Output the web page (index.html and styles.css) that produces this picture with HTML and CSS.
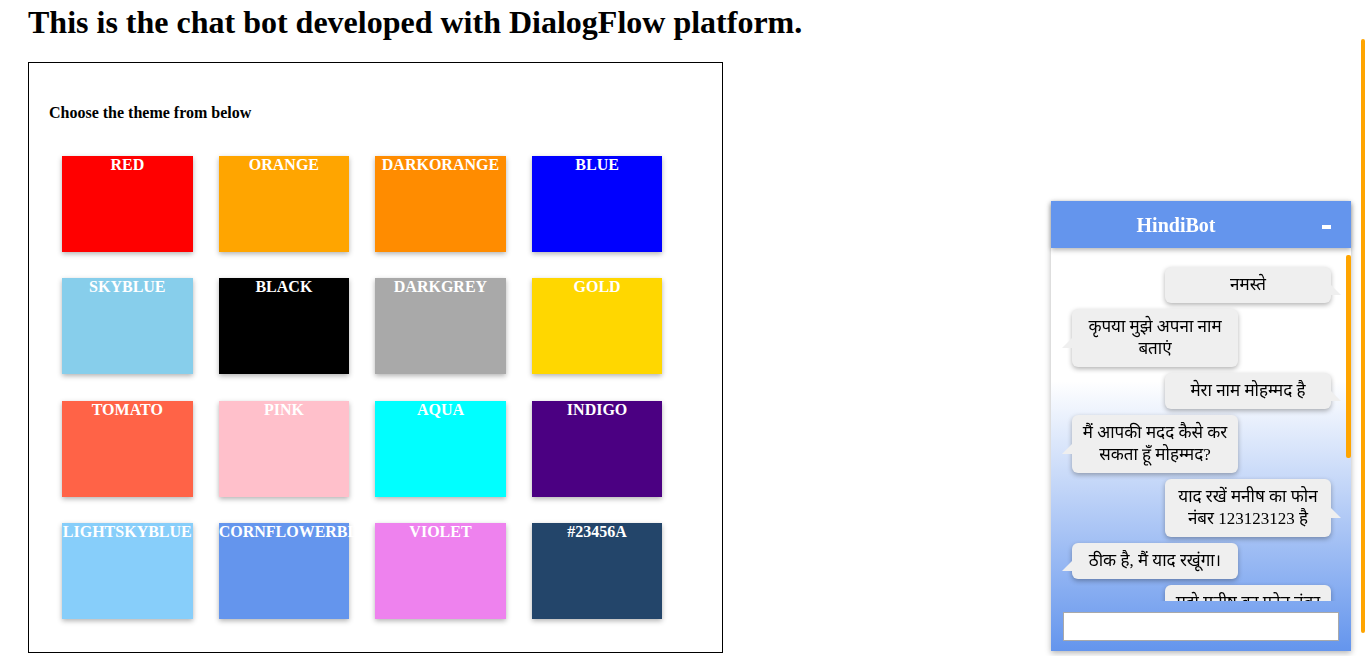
FILE: index.html
```html
<!DOCTYPE html>
<html lang="en">
<head>
<meta charset="utf-8">
<meta name="viewport" content="width=device-width, initial-scale=1">
<title>HindiBot</title>
<link rel="stylesheet" href="styles.css">
</head>
<body>
<main class="page">
  <h1 class="page-title">This is the chat bot developed with DialogFlow platform.</h1>
  <section class="themes">
    <h2 class="themes-title">Choose the theme from below</h2>
    <div class="swatches">
      <button type="button" class="swatch red">RED</button>
      <button type="button" class="swatch orange">ORANGE</button>
      <button type="button" class="swatch darkorange">DARKORANGE</button>
      <button type="button" class="swatch blue">BLUE</button>
      <button type="button" class="swatch skyblue">SKYBLUE</button>
      <button type="button" class="swatch black">BLACK</button>
      <button type="button" class="swatch darkgrey">DARKGREY</button>
      <button type="button" class="swatch gold">GOLD</button>
      <button type="button" class="swatch tomato">TOMATO</button>
      <button type="button" class="swatch pink">PINK</button>
      <button type="button" class="swatch aqua">AQUA</button>
      <button type="button" class="swatch indigo">INDIGO</button>
      <button type="button" class="swatch lightskyblue">LIGHTSKYBLUE</button>
      <button type="button" class="swatch cornflowerblue">CORNFLOWERBLUE</button>
      <button type="button" class="swatch violet">VIOLET</button>
      <button type="button" class="swatch navy">#23456A</button>
    </div>
  </section>
</main>

<aside class="chat">
  <header class="chat-header">
    <h2 class="chat-title">HindiBot</h2>
    <button type="button" class="chat-minimize" aria-label="Minimize"><span class="dash"></span></button>
  </header>
  <div class="messages" lang="hi">
    <p class="message user">नमस्ते</p>
    <p class="message bot">कृपया मुझे अपना नाम बताएं</p>
    <p class="message user">मेरा नाम मोहम्मद है</p>
    <p class="message bot">मैं आपकी मदद कैसे कर सकता हूँ मोहम्मद?</p>
    <p class="message user">याद रखें मनीष का फोन नंबर 123123123 है</p>
    <p class="message bot">ठीक है, मैं याद रखूंगा।</p>
    <p class="message user">मुझे मनीष का फोन नंबर बताओ</p>
  </div>
  <form class="composer">
    <input class="composer-input" type="text" aria-label="Message">
  </form>
  <div class="chat-scroll" aria-hidden="true"></div>
</aside>
<div class="page-scroll" aria-hidden="true"></div>
</body>
</html>
```

FILE: styles.css
```css
body {
  margin: 0;
  background: #fff;
  color: #000;
  font-family: "Liberation Serif", "Times New Roman", "Noto Sans Devanagari", "Noto Sans", serif;
  font-size: 16px;
}

.page {
  padding: 4px 32px 3px 28px;
}

.page-title {
  margin: 0 0 21px;
  font-size: 32px;
  line-height: 37px;
}

.themes {
  width: 50%;
  padding: 20px;
  border: 1px solid #000;
}

.themes-title {
  margin: 21px 0;
  font-size: 16px;
  line-height: 18px;
}

.swatches {
  display: flex;
  flex-wrap: wrap;
}

.swatch {
  box-sizing: border-box;
  display: flex;
  align-items: flex-start;
  justify-content: safe center;
  width: 20%;
  aspect-ratio: 19 / 14;
  margin: 2%;
  padding: 0;
  border: 0;
  box-shadow: 0 2px 5px rgba(0, 0, 0, 0.3);
  color: #fff;
  font: bold 16px/18px "Liberation Serif", "Times New Roman", serif;
  cursor: pointer;
}

.red { background: red; }
.orange { background: orange; }
.darkorange { background: darkorange; }
.blue { background: blue; }
.skyblue { background: skyblue; }
.black { background: black; }
.darkgrey { background: darkgrey; }
.gold { background: gold; }
.tomato { background: tomato; }
.pink { background: pink; }
.aqua { background: aqua; }
.indigo { background: indigo; }
.lightskyblue { background: lightskyblue; }
.cornflowerblue { background: cornflowerblue; }
.violet { background: violet; }
.navy { background: #23456a; }

.chat {
  position: fixed;
  right: 14px;
  bottom: 5px;
  display: flex;
  flex-direction: column;
  width: 300px;
  height: 450px;
  background: linear-gradient(#fff 40%, cornflowerblue);
  box-shadow: 0 2px 6px rgba(0, 0, 0, 0.3);
}

.chat-header {
  display: flex;
  align-items: center;
  padding: 0 20px 0 0;
  height: 47px;
  background: cornflowerblue;
  box-shadow: 0 2px 5px rgba(0, 0, 0, 0.3);
  color: #fff;
}

.chat-title {
  flex: 1;
  margin: 0;
  font-size: 20px;
  line-height: 22px;
  text-align: center;
}

.chat-minimize {
  display: flex;
  align-items: center;
  justify-content: flex-end;
  width: 30px;
  height: 30px;
  padding: 4px 0 0;
  border: 0;
  background: none;
  cursor: pointer;
}

.dash {
  width: 9px;
  height: 4px;
  background: #fff;
}

.messages {
  flex: 1;
  display: flex;
  flex-direction: column;
  gap: 6px;
  min-height: 0;
  margin-top: 7px;
  padding: 12px 20px 0 21px;
  overflow: hidden;
}

.message {
  position: relative;
  flex: none;
  box-sizing: border-box;
  width: 166px;
  margin: 0;
  padding: 7px;
  border-radius: 6px;
  background: #efefef;
  box-shadow: 0 2px 5px rgba(0, 0, 0, 0.3);
  font-size: 17px;
  line-height: 22px;
  text-align: center;
}

.user { align-self: flex-end; }
.bot { align-self: flex-start; }

.message::after {
  content: "";
  position: absolute;
  top: 50%;
  width: 10px;
  height: 10px;
  background: #efefef;
}

.user::after {
  left: 100%;
  clip-path: polygon(0 0, 100% 100%, 0 100%);
}

.bot::after {
  right: 100%;
  clip-path: polygon(100% 0, 100% 100%, 0 100%);
}

.composer {
  display: flex;
  padding: 11px 12px 10px;
}

.composer-input {
  flex: 1;
  box-sizing: border-box;
  min-width: 0;
  height: 29px;
  padding: 0 6px;
  border: 1px solid #a9a9a9;
  background: #fff;
  font: inherit;
}

.chat-scroll {
  position: absolute;
  top: 54px;
  right: 0;
  width: 5px;
  height: 203px;
  border-radius: 2px;
  background: orange;
}

.page-scroll {
  position: fixed;
  top: 6%;
  right: 0;
  bottom: 23px;
  width: 4px;
  border-radius: 2px;
  background: orange;
}
```
